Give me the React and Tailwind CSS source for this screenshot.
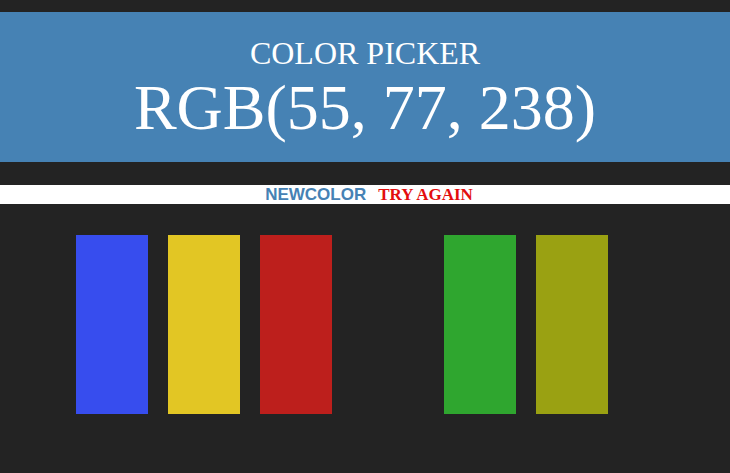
const squares = ['#374dee', '#e2c624', '#bd1f1c', '#232323', '#2fa62f', '#9aa112']

export default function App() {
  return (
    <div className="min-h-[473px] bg-[#232323] pt-[12px]">
      {/* Header */}
      <div className="h-[150px] bg-[#4682b4] flex flex-col items-center text-white font-['Liberation_Serif',serif]">
        <div className="text-[32px] leading-none mt-[25px]">COLOR PICKER</div>
        <div className="text-[64px] leading-none mt-[7px]">RGB(55, 77, 238)</div>
      </div>

      {/* Controls bar */}
      <div className="mt-[23px] h-[19px] bg-white flex items-center justify-center gap-[12px] pl-[8px]">
        <span className="font-['Liberation_Sans',sans-serif] font-bold text-[17px] leading-none text-[#4682b4]">
          NEWCOLOR
        </span>
        <span className="font-['Liberation_Serif',serif] font-bold text-[17px] leading-none text-[#e30e0e]">
          TRY AGAIN
        </span>
      </div>

      {/* Squares */}
      <div className="flex gap-[20px] pl-[76px] mt-[31px]">
        {squares.map((c, i) => (
          <div key={i} className="w-[72px] h-[179px]" style={{ background: c }} />
        ))}
      </div>
    </div>
  )
}
